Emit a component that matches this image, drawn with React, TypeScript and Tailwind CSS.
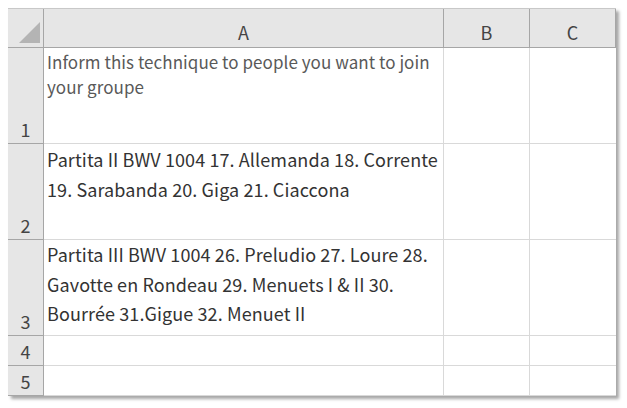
const rows = [
  {
    n: "1",
    h: "h-[96px]",
    text: "Inform this technique to people you want to join your groupe",
    tone: "pt-[1px] text-[17px] tracking-[0.05px] text-[#595959] leading-[25px]",
  },
  {
    n: "2",
    h: "h-[96px]",
    text: "Partita II BWV 1004 17. Allemanda 18. Corrente 19. Sarabanda 20. Giga 21. Ciaccona",
    tone: "text-[18px] tracking-[0.1px] text-[#333333] leading-[30px]",
  },
  {
    n: "3",
    h: "h-[96px]",
    text: "Partita III BWV 1004 26. Preludio 27. Loure 28. Gavotte en Rondeau 29. Menuets I & II 30. Bourrée 31.Gigue 32. Menuet II",
    tone: "text-[18px] tracking-[0.1px] text-[#333333] leading-[29.5px]",
  },
  { n: "4", h: "h-[30px]", text: "", tone: "" },
  { n: "5", h: "h-[30px]", text: "", tone: "" },
];

export default function App() {
  return (
    <div className="h-[408px] w-[627px] bg-white pl-[8px] pt-[8px] font-['Noto_Sans_CJK_JP',sans-serif]">
      <div className="w-[608px] border-t border-[#c8c8c8] bg-white shadow-[3px_3px_3px_rgba(0,0,0,0.35)]">
        <div className="grid grid-cols-[36px_400px_86px_86px] text-[#444]">
          <div className="relative h-[39px] border-b border-r border-[#a6a6a6] bg-[#e6e6e6]">
            <svg className="absolute bottom-[4px] right-[3px]" width="21" height="21" viewBox="0 0 21 21">
              <polygon points="21,0 21,21 0,21" fill="#b4b4b4" />
            </svg>
          </div>
          {["A", "B", "C"].map((c) => (
            <div
              key={c}
              className="flex h-[39px] items-center justify-center border-b border-r border-[#a6a6a6] bg-[#e6e6e6] pt-[8px] text-[18px] last:border-r-0"
            >
              {c}
            </div>
          ))}
          {rows.map((r) => (
            <Row key={r.n} {...r} />
          ))}
        </div>
      </div>
    </div>
  );
}

function Row({ n, h, text, tone }: { n: string; h: string; text: string; tone: string }) {
  return (
    <>
      <div
        className={`${h} flex items-end justify-center border-b border-r border-[#a6a6a6] bg-[#e6e6e6] pb-[3px] text-[18px] leading-[22px] text-[#444]`}
      >
        {n}
      </div>
      <div className={`${h} border-b border-r border-[#d9d9d9] px-[3px] ${tone}`}>
        {text}
      </div>
      <div className={`${h} border-b border-r border-[#d9d9d9]`} />
      <div className={`${h} border-b border-[#d9d9d9]`} />
    </>
  );
}
